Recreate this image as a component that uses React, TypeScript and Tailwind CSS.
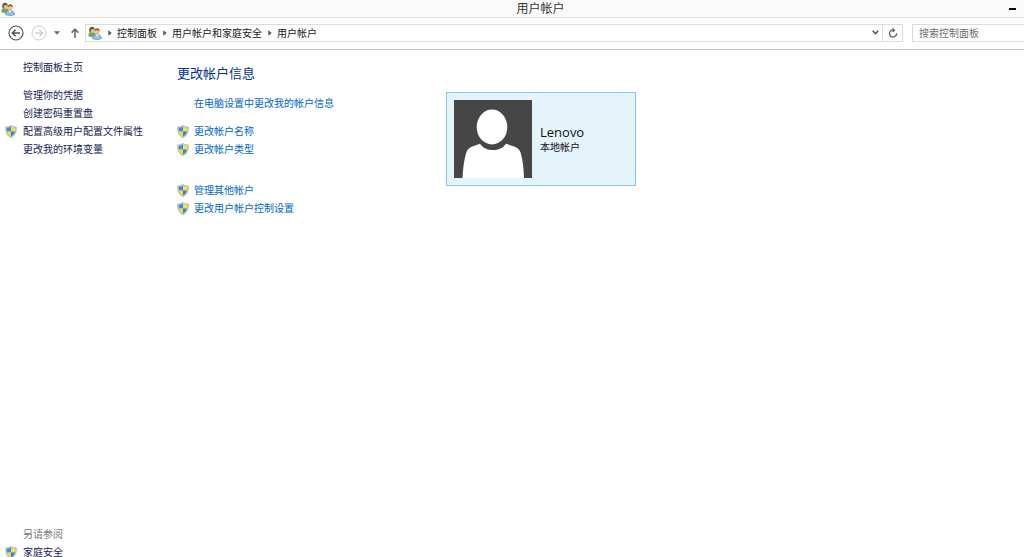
import React from 'react';

interface TaskLink {
  label: string;
  shield?: boolean;
}

const crumbs = ['控制面板', '用户帐户和家庭安全', '用户帐户'];

const sideTasks: TaskLink[] = [
  { label: '管理你的凭据' },
  { label: '创建密码重置盘' },
  { label: '配置高级用户配置文件属性', shield: true },
  { label: '更改我的环境变量' },
];

const accountTasks: TaskLink[] = [
  { label: '更改帐户名称', shield: true },
  { label: '更改帐户类型', shield: true },
];

const otherTasks: TaskLink[] = [
  { label: '管理其他帐户', shield: true },
  { label: '更改用户帐户控制设置', shield: true },
];

function ShieldIcon() {
  return (
    <svg viewBox="0 0 12 13" className="h-[13px] w-3 shrink-0" aria-hidden="true">
      <path d="M6 0.3C4.6 1.4 2.7 1.9 0.6 1.9C0.2 6.8 1.7 10.8 6 12.7C10.3 10.8 11.8 6.8 11.4 1.9C9.3 1.9 7.4 1.4 6 0.3Z" fill="#c3c6c4" stroke="#a3a8a5" strokeWidth="0.5" />
      <path d="M6 1.6C4.8 2.5 3.3 2.9 1.8 3C1.7 4.3 1.8 5.5 2.1 6.6H6Z" fill="#2f92e6" />
      <path d="M6 1.6C7.2 2.5 8.7 2.9 10.2 3C10.3 4.3 10.2 5.5 9.9 6.6H6Z" fill="#ffdf3a" />
      <path d="M2.1 6.6C2.8 8.9 4 10.6 6 11.6V6.6Z" fill="#ffd92a" />
      <path d="M9.9 6.6C9.2 8.9 8 10.6 6 11.6V6.6Z" fill="#2186de" />
    </svg>
  );
}

function UsersIcon() {
  return (
    <svg viewBox="0 0 14 14" className="h-3.5 w-3.5 shrink-0" aria-hidden="true">
      <path d="M0.8 9.9C0.6 7.4 1.7 6.2 4.1 6.1C6.5 6.2 7.4 7.5 7.3 9.9C5.3 11 2.8 11 0.8 9.9Z" fill="#6fae52" stroke="#4a7f3c" strokeWidth="0.5" />
      <ellipse cx="4.2" cy="4.3" rx="2.1" ry="2.7" fill="#e8b98a" />
      <path d="M1.5 6.2C0.7 2.9 1.6 0.9 3.9 0.8C6 0.8 7 2.2 6.6 4.3C6 3.3 5.2 2.9 4.2 3C3.1 3 2.7 4 2.8 6.6Z" fill="#6e5230" />
      <path d="M4.5 12.7C4.4 10 5.9 8.7 8.9 8.6C12.1 8.7 13.5 10.1 13.4 12.7C10.7 13.8 7.3 13.8 4.5 12.7Z" fill="#8fc0ee" stroke="#4b87c4" strokeWidth="0.6" />
      <path d="M7.7 8.7L9 10.8L10.4 8.7Z" fill="#fff" />
      <ellipse cx="9.1" cy="6.2" rx="2.2" ry="2.8" fill="#efbf92" />
      <path d="M6.7 6C6.2 3.6 7.2 2.3 9.1 2.3C11.2 2.3 12.1 3.7 11.6 6.2C11.3 4.8 10.5 4.2 9.3 4.3C7.9 4.2 7.1 4.7 6.7 6Z" fill="#9a5d2b" />
    </svg>
  );
}

function CrumbArrow() {
  return (
    <svg viewBox="0 0 4 6" className="h-1.5 w-1 shrink-0" aria-hidden="true">
      <path d="M0.3 0.2L3.7 3L0.3 5.8Z" fill="#555" />
    </svg>
  );
}

function TaskList({ items }: { items: TaskLink[] }) {
  return (
    <ul>
      {items.map((item) => (
        <li key={item.label} className="flex h-[18px] items-center gap-[5px]">
          {item.shield && <ShieldIcon />}
          <a href="#" className="whitespace-nowrap text-[#0066cc] hover:underline">{item.label}</a>
        </li>
      ))}
    </ul>
  );
}

function SideLink({ label, shield }: TaskLink) {
  return (
    <div className="flex h-[18px] items-center gap-[6px]">
      <span className="flex w-3 shrink-0">{shield && <ShieldIcon />}</span>
      <a href="#" className="whitespace-nowrap text-[#151c55] hover:underline">{label}</a>
    </div>
  );
}

function TitleBar() {
  return (
    <header className="grid h-[18px] shrink-0 grid-cols-[1fr_auto_1fr] items-center border-b border-[#e3e3e3] bg-[#fafafa] pr-2 pl-px">
      <UsersIcon />
      <h1 className="pl-16 text-xs leading-4 text-[#333]">用户帐户</h1>
      <button type="button" aria-label="最小化" className="flex h-4 items-center justify-self-end">
        <span className="h-0.5 w-[7px] bg-black" />
      </button>
    </header>
  );
}

function Toolbar() {
  return (
    <div className="flex h-8 shrink-0 items-center border-b border-[#bdbdbd] pb-0.5 pl-2">
      <button type="button" aria-label="后退">
        <svg viewBox="0 0 16 16" className="h-4 w-4" fill="none" stroke="#555">
          <circle cx="8" cy="8" r="7" strokeWidth="1.2" />
          <path d="M12 8H4.5M7.6 4.7L4.3 8L7.6 11.3" strokeWidth="1.6" />
        </svg>
      </button>
      <button type="button" aria-label="前进" className="ml-[7px]" disabled>
        <svg viewBox="0 0 16 16" className="h-4 w-4" fill="none" stroke="#cfcfcf">
          <circle cx="8" cy="8" r="7" strokeWidth="1" />
          <path d="M4 8H11.5M8.4 4.7L11.7 8L8.4 11.3" strokeWidth="1.4" />
        </svg>
      </button>
      <button type="button" aria-label="最近浏览的位置" className="ml-[7px]">
        <svg viewBox="0 0 6 4" className="h-1 w-1.5">
          <path d="M0 0.3H6L3 3.7Z" fill="#666" />
        </svg>
      </button>
      <button type="button" aria-label="上移" className="ml-2.5">
        <svg viewBox="0 0 10 10" className="h-2.5 w-2.5" fill="none" stroke="#666" strokeWidth="1.5">
          <path d="M5 10V1.2M1.6 4.6L5 1.2L8.4 4.6" />
        </svg>
      </button>

      <nav className="ml-[5px] flex h-[18px] flex-1 items-center border border-[#dcdcdc] pl-0.5" aria-label="地址">
        <UsersIcon />
        <ol className="flex flex-1 items-center">
          {crumbs.map((crumb) => (
            <li key={crumb} className="flex items-center gap-[5px] pl-1.5">
              <CrumbArrow />
              <a href="#" className="whitespace-nowrap text-[#1a1a1a]">{crumb}</a>
            </li>
          ))}
        </ol>
        <button type="button" aria-label="以前的位置" className="px-[3px]">
          <svg viewBox="0 0 7 5" className="h-[5px] w-[7px]" fill="none" stroke="#555" strokeWidth="1.6">
            <path d="M0.7 0.8L3.5 3.7L6.3 0.8" />
          </svg>
        </button>
        <button type="button" aria-label="刷新" className="flex h-full w-5 items-center justify-center border-l border-[#dcdcdc]">
          <svg viewBox="0 0 10 10" className="h-2.5 w-2.5" fill="none" stroke="#666" strokeWidth="1.3">
            <path d="M3.6 2.3A3.5 3.5 0 1 0 8.5 5.2" />
            <path d="M2.8 2.2H6.2M4.6 0.5L6.4 2.2L4.6 4" />
          </svg>
        </button>
      </nav>

      <input
        type="search"
        aria-label="搜索控制面板"
        placeholder="搜索控制面板"
        className="ml-[9px] h-[18px] w-28 border border-r-0 border-[#dcdcdc] px-1.5 outline-none placeholder:text-[#6d6d6d]"
      />
    </div>
  );
}

function AccountCard() {
  return (
    <section className="flex h-[94px] w-[190px] items-center gap-2 border border-[#83c9ea] bg-[#e5f3fb] px-[7px]">
      <svg viewBox="0 0 78 78" className="h-[78px] w-[78px] shrink-0" role="img" aria-label="Lenovo">
        <rect width="78" height="78" fill="#464646" />
        <ellipse cx="38" cy="27" rx="15.3" ry="17.5" fill="#fff" />
        <path d="M8.5 78C9 69 10 60 12 53.5C13 49.5 15 47.7 19 46.2L26 43.7C29 48 33.5 50 39 50C44.5 50 49 48 52 43.7L60 46.5C64 48 66 50 67 54C69 61 69.7 70 70 78Z" fill="#fff" />
      </svg>
      <div>
        <p className="font-['Open_Sans',sans-serif] text-[13px] leading-4 text-[#111]">Lenovo</p>
        <p className="leading-[14px] text-[#111]">本地帐户</p>
      </div>
    </section>
  );
}

export default function App() {
  return (
    <div className="flex h-screen flex-col overflow-hidden bg-white font-['Noto_Sans','Noto_Sans_CJK_SC',sans-serif] text-[10px] leading-[14px]">
      <TitleBar />
      <Toolbar />
      <div className="flex min-h-0 flex-1">
        <aside className="-mb-1 flex w-[177px] shrink-0 flex-col justify-between pt-2 pl-[5px]">
          <div>
            <SideLink label="控制面板主页" />
            <ul className="mt-2.5">
              {sideTasks.map((task) => (
                <li key={task.label}>
                  <SideLink {...task} />
                </li>
              ))}
            </ul>
          </div>
          <div>
            <h2 className="pl-[18px] leading-[18px] text-[#7a7a7a]">另请参阅</h2>
            <SideLink label="家庭安全" shield />
          </div>
        </aside>

        <main className="flex flex-1 items-start pt-3.5">
          <div className="w-[269px] shrink-0">
            <h2 className="text-[13px] leading-[18px] text-[#003399]">更改帐户信息</h2>
            <div className="mt-3 mb-2.5 pl-[17px]">
              <TaskList items={[{ label: '在电脑设置中更改我的帐户信息' }]} />
            </div>
            <TaskList items={accountTasks} />
            <div className="mt-[23px]">
              <TaskList items={otherTasks} />
            </div>
          </div>
          <div className="pt-7">
            <AccountCard />
          </div>
        </main>
      </div>
    </div>
  );
}
